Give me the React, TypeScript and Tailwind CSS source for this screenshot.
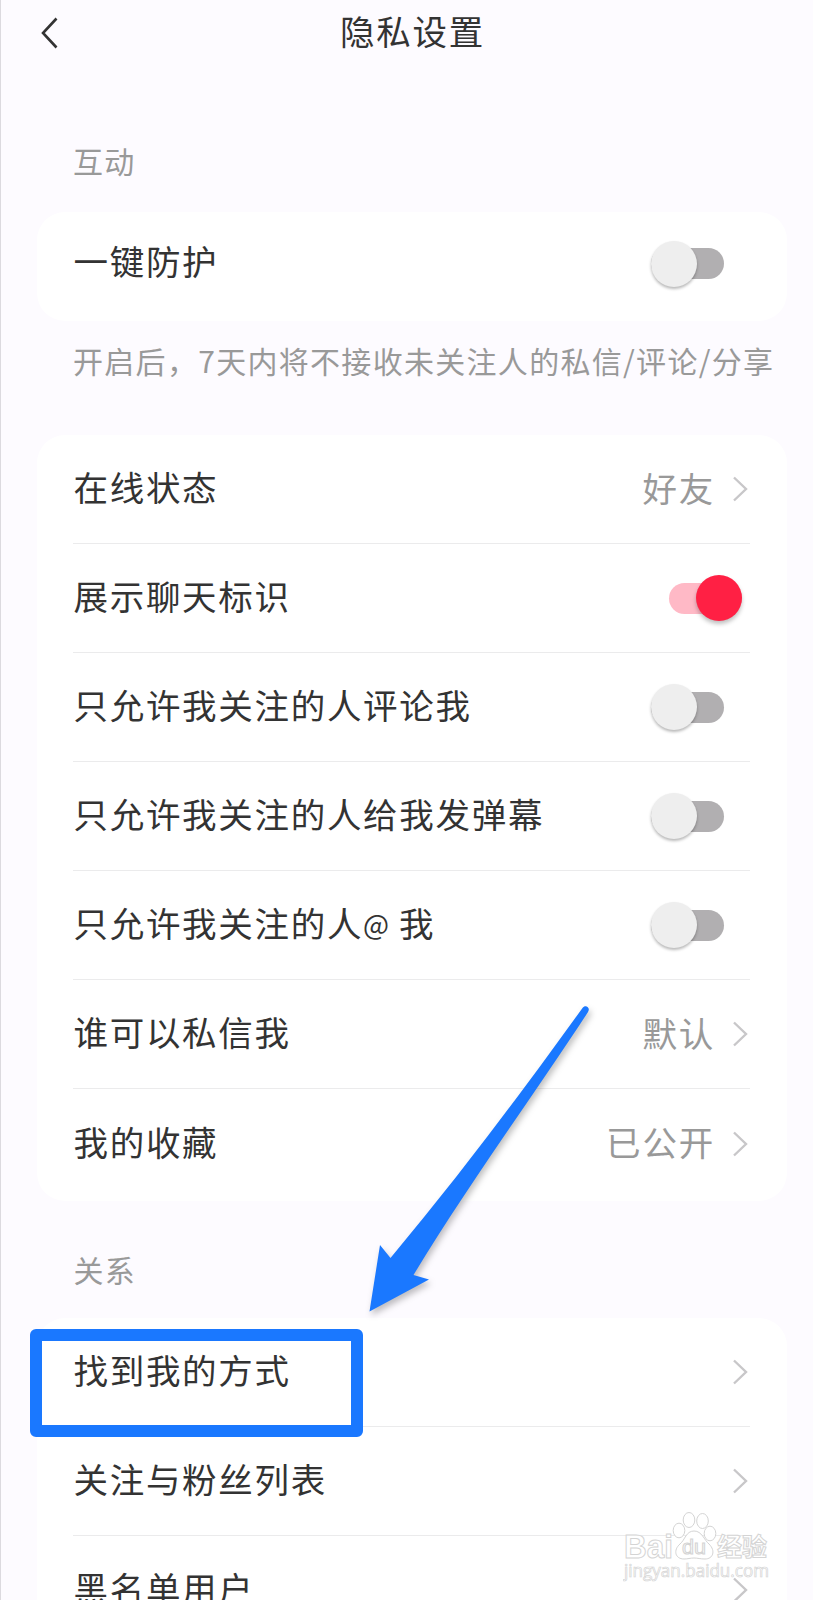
import React from "react";

type Item = {
  label: React.ReactNode;
  value?: string;
  toggle?: "on" | "off";
};

const interaction: Item[] = [
  { label: "在线状态", value: "好友" },
  { label: "展示聊天标识", toggle: "on" },
  { label: "只允许我关注的人评论我", toggle: "off" },
  { label: "只允许我关注的人给我发弹幕", toggle: "off" },
  {
    label: (
      <>
        只允许我关注的人<span className="relative -top-[2px] text-[27.5px] tracking-[0.5px]">@</span> 我
      </>
    ),
    toggle: "off",
  },
  { label: "谁可以私信我", value: "默认" },
  { label: "我的收藏", value: "已公开" },
];

const relations: Item[] = [
  { label: "找到我的方式" },
  { label: "关注与粉丝列表" },
  { label: "黑名单用户" },
];

function Toggle({ on }: { on: boolean }) {
  if (on) {
    return (
      <div className="mr-[8px] flex h-[31px] w-[73px] items-center justify-end rounded-full bg-[#ffb9c6]">
        <div className="h-[46px] w-[46px] shrink-0 rounded-full bg-[#ff2044] shadow-[0_3px_4px_rgba(0,0,0,0.25)]" />
      </div>
    );
  }
  return (
    <div className="mr-[26px] flex h-[31px] w-[73px] items-center rounded-full bg-[#b1afb1]">
      <div className="h-[46px] w-[46px] shrink-0 rounded-full bg-[#eeeeee] shadow-[0_2px_3px_rgba(0,0,0,0.28)]" />
    </div>
  );
}

function Chevron() {
  return (
    <svg width="16" height="26" viewBox="0 0 16 26" fill="none" className="mr-[2px]">
      <path d="M2 1.5L14 13L2 24.5" stroke="#c8c7c9" strokeWidth="2.4" />
    </svg>
  );
}

function Row({ item, last }: { item: Item; last: boolean }) {
  return (
    <div
      className={
        last
          ? "flex h-[109px] items-center justify-between"
          : "flex h-[109px] items-center justify-between border-b-[1.5px] border-[#ebebec]"
      }
    >
      <span className="pb-[5px] pl-[0.5px] text-[34.5px] tracking-[1.7px] text-[#333333]">{item.label}</span>
      {item.toggle ? (
        <Toggle on={item.toggle === "on"} />
      ) : (
        <div className="flex items-center gap-[17px]">
          <span className="pb-[4px] text-[34.5px] tracking-[1.8px] text-[#999999]">{item.value}</span>
          <Chevron />
        </div>
      )}
    </div>
  );
}

function Watermark() {
  return (
    <svg
      width="150"
      height="74"
      viewBox="0 0 150 74"
      className="absolute top-[1510px] left-[622px]"
      fill="#ffffff"
      stroke="#d4d4d4"
      strokeWidth="1"
    >
      <text x="1" y="48" fontSize="33" fontWeight="700" fontFamily="Liberation Sans, sans-serif" textLength="49" lengthAdjust="spacingAndGlyphs">
        Bai
      </text>
      <ellipse cx="56" cy="20.5" rx="5.8" ry="7.3" />
      <ellipse cx="66" cy="10" rx="5.8" ry="7.5" />
      <ellipse cx="79.5" cy="11" rx="5.8" ry="7.5" />
      <ellipse cx="87" cy="23.5" rx="5.8" ry="7.3" />
      <path d="M71 21C79 21 81 30 86 34C93 41 90 49 82 49C77 49 75 48 71 48C67 48 65 49 61 49C52 49 50 40 57 34C62 30 63 21 71 21Z" />
      <text x="59" y="44" fontSize="20" fontFamily="Liberation Sans, sans-serif" textLength="24" lengthAdjust="spacingAndGlyphs">
        du
      </text>
      <text x="94" y="46" fontSize="25" fontWeight="700" fontFamily="Noto Sans CJK SC, sans-serif" textLength="50">
        经验
      </text>
      <text x="1" y="67" fontSize="17.5" fontFamily="Open Sans, sans-serif" textLength="145" lengthAdjust="spacingAndGlyphs" strokeWidth="0.7">
        jingyan.baidu.com
      </text>
    </svg>
  );
}

export default function App() {
  return (
    <div className="relative h-[1600px] w-[813px] overflow-hidden border-l border-[#dcdadf] bg-[#fdfbff] font-['Noto_Sans_CJK_SC',sans-serif] leading-none whitespace-nowrap">
      <header className="grid h-[66px] grid-cols-3 items-center">
        <svg width="20" height="32" viewBox="0 0 20 32" fill="none" className="ml-[39px]">
          <path d="M16.5 1.5L3 16L16.5 30.5" stroke="#333333" strokeWidth="2.6" />
        </svg>
        <h1 className="pb-[5px] pl-[11px] text-center text-[34.5px] tracking-[1.8px] text-[#333333]">隐私设置</h1>
      </header>

      <main className="pr-[26px] pl-[36px]">
        <h2 className="mt-[79px] pl-[36px] text-[30px] tracking-[1.2px] text-[#999999]">互动</h2>

        <section className="mt-[37px] flex h-[109px] items-center justify-between rounded-[28px] bg-white pr-[37px] pb-[6px] pl-[36.5px]">
          <span className="pb-[6px] text-[34.5px] tracking-[1.7px] text-[#333333]">一键防护</span>
          <Toggle on={false} />
        </section>
        <p className="mt-[24px] pl-[36px] text-[30px] tracking-[1.3px] text-[#999999]">
          开启后，7天内将不接收未关注人的私信/评论/分享
        </p>

        <section className="mt-[60px] rounded-[28px] bg-white pr-[37px] pb-[3px] pl-[36px]">
          {interaction.map((item, i) => (
            <Row key={i} item={item} last={i === interaction.length - 1} />
          ))}
        </section>

        <h2 className="mt-[53px] pl-[36.5px] text-[30px] tracking-[1.2px] text-[#999999]">关系</h2>
        <section className="mt-[33.5px] rounded-t-[28px] bg-white pr-[37px] pl-[36px]">
          {relations.map((item, i) => (
            <Row key={i} item={item} last={i === relations.length - 1} />
          ))}
        </section>
      </main>

      {/* highlight box and arrow */}
      <div className="absolute top-[1329px] left-[29px] h-[108px] w-[333px] rounded-[6px] border-[12px] border-[#1a78ff]" />
      <svg
        width="240"
        height="330"
        viewBox="0 0 240 330"
        className="absolute top-[1000px] left-[359px] drop-shadow-[2px_4px_3px_rgba(0,0,0,0.25)]"
      >
        <path
          d="M222.500 8C225 4 231 7 228 12C180 86 106 188 53.500 275L69 279.500L9.500 311.500L20 245L30.500 258C99 176 162 92 222.500 8Z"
          fill="#1a78ff"
        />
      </svg>

      <Watermark />
    </div>
  );
}
